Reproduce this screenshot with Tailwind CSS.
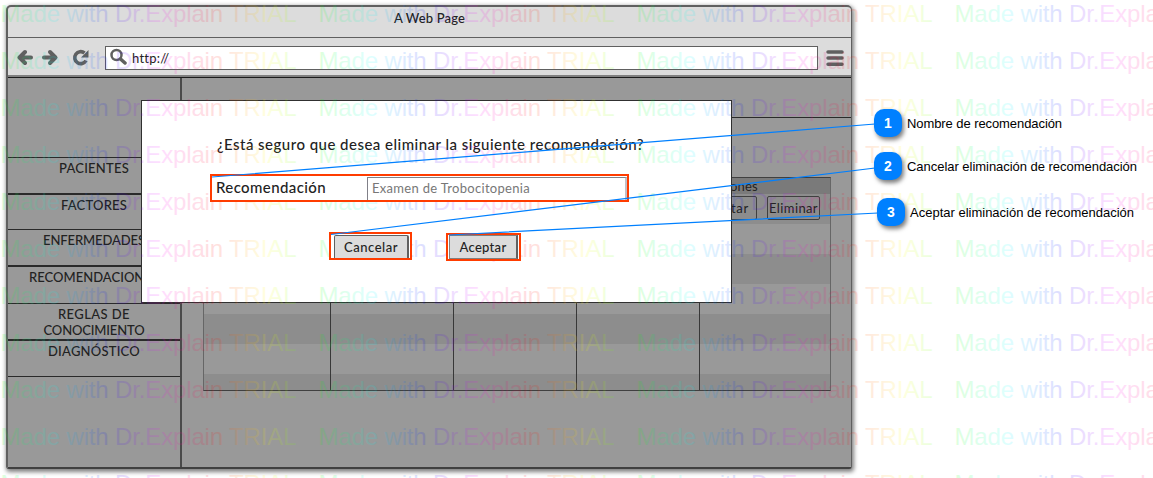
<!DOCTYPE html>
<html lang="es">
<head>
<meta charset="utf-8">
<title>A Web Page</title>
<script src="https://cdn.jsdelivr.net/npm/@tailwindcss/browser@4"></script>
</head>
<body class="bg-white">
<main class="relative w-[1153px] h-[478px] overflow-hidden font-[Lato,sans-serif] text-[13px] leading-4 text-[#222]">
  <!-- Browser window -->
  <div class="pt-[5px] pl-[6px]">
    <section class="w-[846px] h-[464px] flex flex-col rounded-t-[5px] rounded-b-[3px] overflow-hidden border-2 border-r border-[#606060] border-b-[#404040] bg-[#dcdcdc] shadow-[1px_2px_4px_1px_rgba(0,0,0,0.5)]">
      <header class="h-[31px] shrink-0 border-b border-[#606060] flex justify-center pt-[3px]"><span data-w="71" class="whitespace-nowrap font-medium">A Web Page</span></header>
      <div class="h-[37px] shrink-0 flex items-start pt-[8px] pl-[9px] pr-[6px]">
        <svg class="w-[74px] h-[20px] mt-[1px] mr-[14px] shrink-0" viewBox="0 0 74 20" fill="none" stroke="#606060">
          <g stroke-linecap="round" stroke-linejoin="round" stroke-width="4"><path d="M14 10.500H3M8 5L2.500 10.500L8 16"/>
          <path d="M27 10.500H38M33 5L38.500 10.500L33 16"/></g>
          <path d="M69 13.500A6 6 0 1 1 67.500 6" stroke-width="3.600"/>
          <path d="M71.500 3V10.500H64Z" fill="#606060" stroke="none"/>
        </svg>
        <div class="w-[713px] h-[24px] bg-white border border-[#606060] flex items-center shrink-0">
          <svg class="w-[18px] h-[18px] ml-[3px] mr-[5px] mb-[2px]" viewBox="0 0 18 18" fill="none" stroke="#606060"><circle cx="7.500" cy="7" r="5" stroke-width="2.500"/><path d="M11.500 11L16 15" stroke-width="3.500" stroke-linecap="round"/></svg>
          <span data-w="37" class="whitespace-nowrap">http://</span>
        </div>
        <svg class="w-[18px] h-[18px] ml-[8px] mt-[3px] shrink-0" viewBox="0 0 18 18" stroke="#606060" stroke-width="3.500" stroke-linecap="round"><path d="M2 3H16M2 9H16M2 15.300H16"/></svg>
      </div>
      <div class="h-[3px] shrink-0 bg-[#808080] border-b border-[#1c1c1c]"></div>
      <div class="flex grow bg-[#999] min-h-0">
        <nav class="w-[174px] shrink-0 border-r-2 border-[#4a4a4a] flex flex-col text-center font-medium whitespace-nowrap">
          <div class="h-[80px] shrink-0 border-b border-[#2a2a2a]"></div>
          <div class="h-[37px] shrink-0 border-b-2 border-[#2a2a2a] pt-[2px]"><span data-w="70">PACIENTES</span></div>
          <div class="h-[35px] shrink-0 border-b border-[#2a2a2a] pt-[2px]"><span data-w="66">FACTORES</span></div>
          <div class="h-[37px] shrink-0 border-b-2 border-[#2a2a2a] pt-[2px]"><span data-w="102">ENFERMEDADES</span></div>
          <div class="h-[37px] shrink-0 border-b border-[#2a2a2a] pt-[2px]"><span data-w="130">RECOMENDACIONES</span></div>
          <div class="h-[37px] shrink-0 border-b-2 border-[#2a2a2a] pt-[2px] flex flex-col items-center"><span data-w="72">REGLAS DE</span><span data-w="101">CONOCIMIENTO</span></div>
          <div class="h-[36px] shrink-0 border-b border-[#2a2a2a] pt-[2px]"><span data-w="92">DIAGNÓSTICO</span></div>
        </nav>
        <div class="grow flex flex-col">
          <div class="h-[40px] shrink-0 border-b border-[#2a2a2a]"></div>
          <div class="mt-[59px] ml-[21px] w-[628px] h-[214px] border border-x-[#666] border-t-[#404040] border-b-[#404040] flex flex-col relative">
            <div class="h-[16px] shrink-0 bg-[#7a7a7a] flex justify-end pr-[72px]"><span data-w="56" class="whitespace-nowrap">Opciones</span></div>
            <div class="h-[30px] shrink-0 bg-[#8d8d8d] flex justify-end items-start gap-[10px] pt-[2px] pr-[10px]">
              <div class="w-[54px] h-[24px] border border-[#404040] rounded-xs flex items-center justify-end pr-[7px]"><span data-w="38">Editar</span></div>
              <div class="w-[53px] h-[24px] border border-[#404040] rounded-xs flex items-center justify-center"><span data-w="49">Eliminar</span></div>
            </div>
            <div class="h-[30px] shrink-0"></div>
            <div class="h-[30px] shrink-0 bg-[#8d8d8d]"></div>
            <div class="h-[30px] shrink-0"></div>
            <div class="h-[30px] shrink-0 bg-[#8d8d8d]"></div>
            <div class="h-[30px] shrink-0"></div>
            <div class="grow bg-[#8d8d8d]"></div>
            <div class="absolute left-0 bottom-0 h-[90px] w-[496px] grid grid-cols-[127px_123px_123px_123px]">
              <i class="border-r border-[#383838]"></i><i class="border-r border-[#383838]"></i><i class="border-r border-[#383838]"></i><i class="border-r border-[#383838]"></i>
            </div>
          </div>
        </div>
      </div>
    </section>
  </div>

  <!-- Dialog -->
  <section class="absolute left-[141px] top-[100px] w-[591px] h-[203px] bg-white border border-[#303030] pl-[75px] pt-[35px]">
    <span data-w="427" class="whitespace-nowrap text-[15px] font-medium">¿Está seguro que desea eliminar la siguiente recomendación?</span>
  </section>

  <!-- Watermark -->
  <svg class="absolute inset-0 w-full h-full" viewBox="0 0 1153 478" opacity="0.125" font-family="Liberation Sans, Arial, sans-serif" font-size="24">
    <defs><linearGradient id="hue" gradientUnits="userSpaceOnUse" x1="-104" x2="213.700" y1="0" y2="0" spreadMethod="repeat">
      <stop offset="0" stop-color="#f00"/><stop offset=".1667" stop-color="#ff0"/><stop offset=".3333" stop-color="#0f0"/><stop offset=".5" stop-color="#0ff"/><stop offset=".6667" stop-color="#00f"/><stop offset=".8333" stop-color="#f0f"/><stop offset="1" stop-color="#f00"/>
    </linearGradient></defs>
    <g id="marks" fill="url(#hue)"></g>
  </svg>

  <!-- Highlighted controls -->
  <div class="absolute left-[210px] top-[174px] w-[419px] h-[28px] bg-white border-2 border-[#ff3c00] flex items-start pl-[4px] pt-[1px]">
    <div class="text-[15px] font-medium leading-[20px] w-[151px] whitespace-nowrap"><span data-w="110">Recomendación</span></div>
    <div class="w-[260px] h-[23px] shrink-0 border border-b-0 border-[#808088] border-r-2 border-r-[#c0c0c8] pl-1 leading-[21px] text-[#777]"><span data-w="158" class="whitespace-nowrap">Examen de Trobocitopenia</span></div>
  </div>
  <div class="absolute left-[329px] top-[232px] w-[83px] h-[28px] bg-white border-2 border-[#ff3c00] flex pl-[3px] pt-[1px]">
    <div class="w-[75px] h-[23px] bg-[#dcdcdc] border border-b-0 border-[#606060] border-r-2 rounded-t-xs flex items-center justify-center pb-px font-medium"><span data-w="54">Cancelar</span></div>
  </div>
  <div class="absolute left-[446px] top-[233px] w-[75px] h-[28px] bg-white border-2 border-[#ff3c00] flex pl-[1px] pt-[0px]">
    <div class="w-[69px] h-[24px] bg-[#dcdcdc] border border-[#808080] border-r-2 border-r-[#606060] flex items-center justify-center pb-px font-medium"><span data-w="47">Aceptar</span></div>
  </div>

  <!-- Callouts -->
  <svg class="absolute inset-0 w-full h-full" viewBox="0 0 1153 478" stroke="#0080ff" stroke-width="1.200"><path d="M212 177L875 124M331 234.500L875 168M449 235L878 213"/></svg>
  <div class="absolute left-[874px] top-[109px] flex flex-col gap-[15px] font-['Liberation_Sans',Arial,sans-serif] text-[13px] text-black">
    <div class="flex items-center gap-[5px] h-[28px]"><b class="size-[28px] rounded-[10px] bg-[#0080ff] shadow-[2px_3px_4px_rgba(0,0,0,0.5)] text-white text-[14px] flex items-center justify-center">1</b><span data-w="155" class="whitespace-nowrap pt-px">Nombre de recomendación</span></div>
    <div class="flex items-center gap-[5px] h-[28px]"><b class="size-[28px] rounded-[10px] bg-[#0080ff] shadow-[2px_3px_4px_rgba(0,0,0,0.5)] text-white text-[14px] flex items-center justify-center">2</b><span data-w="230" class="whitespace-nowrap pt-px">Cancelar eliminación de recomendación</span></div>
    <div class="flex items-center gap-[5px] h-[28px] mt-[3px] ml-[3px]"><b class="size-[28px] rounded-[10px] bg-[#0080ff] shadow-[2px_3px_4px_rgba(0,0,0,0.5)] text-white text-[14px] flex items-center justify-center">3</b><span data-w="224" class="whitespace-nowrap pt-px">Aceptar eliminación de recomendación</span></div>
  </div>
</main>
<script>
  // Repeat the watermark over the page
  const marks = document.getElementById('marks');
  for (let y = 21.5; y < 500; y += 47) for (let i = 0; i < 4; i++) {
    const t = document.createElementNS('http://www.w3.org/2000/svg', 'text');
    t.setAttribute('x', 0.5 + i * 318);
    t.setAttribute('y', y);
    t.setAttribute('textLength', 296);
    t.textContent = 'Made with Dr.Explain TRIAL';
    marks.appendChild(t);
  }
  // Track each label out to its set width
  function fit() {
    document.querySelectorAll('[data-w]').forEach(el => {
      el.style.letterSpacing = '0px';
      const r = document.createRange();
      r.selectNodeContents(el);
      const d = (el.dataset.w - r.getBoundingClientRect().width) / el.textContent.length;
      el.style.letterSpacing = d + 'px';
    });
  }
  fit();
  window.addEventListener('load', fit);
  document.fonts.ready.then(fit);
  setTimeout(fit, 50);
  setTimeout(fit, 200);
</script>
</body>
</html>
